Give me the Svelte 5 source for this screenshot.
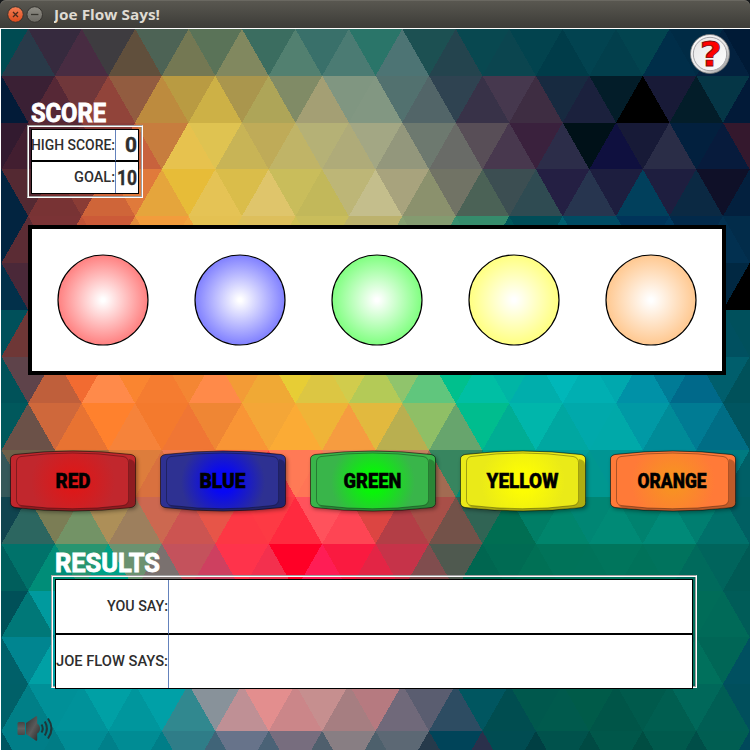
<script>
  const HALF = 26.72;
  const ROW = 46.8;
  const LEFT = 1.5;
  const TOP = 29;

  // One line per row of the mosaic, alternating down and up triangles.
  const mosaic = [
    '004b52 293a49 362a3e 482c42 3e3c40 604f3c 4d6355 747853 5a7358 81885f 3b6d60 528070 39706a 4b7b73 2a7569 4d7474 1c5052 24444e 084850 0b454f 02434e 003c49 024350 023f4c 02444f 002e49 002b45 03213f 001a36',
    '021b38 3a2034 562836 70373a 91443a 925c40 bd8b3e b99b42 cdb146 aa964d aea558 808b66 a49f74 809681 829782 52716f 526568 2f4351 383248 46384e 3e2d42 172a40 1b213d 031d29 000000 181a37 031d29 053646 021a38',
    '321a2f 421e30 5a2a34 6a3036 8a3e3a c8623d c77d3e e7c24e dfc351 c8b456 bfab58 c0b467 b5b176 afab79 a3a784 93977c 6d796f 696b67 584e57 48384e 3a213d 2c2d49 001118 0f103f 171a37 2a2d47 02203e 071b3c 34182d',
    '022440 542932 783334 8a3c35 cf6539 e07a3b e5a53c e7bc38 e5c355 dabd4a dfc56b c9bd5b c2b85a bdb677 c4be8c a8a37d 8b916d 717365 4b6256 3c4e52 2f4b52 241f43 27354f 1d1e3f 01405c 1e1e3f 0b2943 0f1028 03203e',
    '022440 5b2c34 7a3335 c15337 cc5a38 e38b3b f29c3c f2a43e e4c152 dcc15a ddbf5c cfc055 c9bd5b bdb36b bcb26d 88a272 849b70 3a9070 358c6c 00585c 004d58 006070 004b63 004b63 00345a 003a60 02294a 023050 022c4a',
    '02304a 4a2838 - - - - - - - - - - - - - - - - - - - - - - - - - 012842 000000',
    '00505a 6e3736 - - - - - - - - - - - - - - - - - - - - - - - - - 005060 00505c',
    '005259 5e434a bf5f3b f26b31 ff8a4a fa8530 f57c30 f48633 ff8a49 f39b36 f0a935 e7cd35 dcc643 d1cc4c b4ca57 90c46c 60c67d 00c08d 00bfa4 00b5a5 00aeac 00b7b9 00afb2 00a8ae 0091a7 007b96 00698a 005e6c 00515a',
    '00585c 6b5148 cf683b e87332 ff812d f6833a f47a2d f07634 ef8634 f99535 f4a637 fbab35 efb437 f69c40 e2b93e b9af50 8fbf66 67a56d 00bd8e 00ad94 00b6ab 00a7a1 00a9ab 00a9a9 0099a5 008b98 007b93 006d85 005560',
    '35585a 6e6049 8a6b45 a87040 b87040 dd7d3c d9713f ee7a52 ef6548 ff6a50 ff3f48 ff7a56 ff7556 e8855c d0805a c48460 a26b52 37855f 008c78 00a08c 009c90 009c98 009790 009593 00908c 008a90 008080 007a80 005f66',
    '10444f 2c6660 7b7d55 739366 ad8f58 9d7f5d cc6850 cc5451 e75548 fd3744 fd3a44 ff2a3f ff525c fe4554 dc4542 b33e46 a94f48 735249 306454 006e52 007e66 00856c 008674 008a76 00826f 008a78 007e70 00706a 005f62',
    '005e5c 00726a 008d78 289570 00a086 6b9270 7a716f c4525c ce4060 ff334b f3304e ff0026 ff1d55 fa1a40 e32545 c63349 804d4e 4f594f 006650 006b53 007055 007359 00735a 00755c 00725a 00735d 006a5c 00645c 005a55',
    '005058 007878 009a9e 009a9e - - - - - - - - - - - - - - - - - - - - - 006a56 006c58 006a58 005c58',
    '006069 008590 00a0a5 00a0a5 - - - - - - - - - - - - - - - - - - - - - 006656 00705c 006656 005060',
    '006068 007f87 009098 00929a 00a0a5 00969d 00a0a7 31888f 88929a bf9095 e38e8e cb8689 c68f8f a67e81 b67a80 70697a 5a5d70 2d4c62 005660 004d50 00584d 005a4d 005b49 005548 005a4c 005e50 00685a 005e54 004f5c',
    '005560 007e88 007c85 008c95 00808a 008c94 007e88 2f7d88 406478 67738a 4a6276 776d7e 4f5f6d 887e83 4d606c 5c6874 263a4b 004459 2a304b 004c52 003f43 00524c 004a43 00574a 004d42 005a4d 004e48 005e52 00485a'
  ];

  const triangles = mosaic.flatMap((line, r) =>
    line.split(' ').map((c, i) => {
      const x = LEFT + HALF * i;
      const y0 = TOP + ROW * r;
      const y1 = y0 + ROW;
      const up = (r + i) % 2 === 1;
      return {
        color: c === '-' ? '#000' : '#' + c,
        points: up
          ? `${x},${y0} ${x + HALF},${y1} ${x - HALF},${y1}`
          : `${x - HALF},${y0} ${x + HALF},${y0} ${x},${y1}`
      };
    })
  );

  const lights = [
    { id: 'red', color: '#ff8080' },
    { id: 'blue', color: '#8080ff' },
    { id: 'green', color: '#80ff80' },
    { id: 'yellow', color: '#ffff80' },
    { id: 'orange', color: '#ffc890' }
  ];

  const buttons = [
    { name: 'RED', edge: '#c1272d', glow: '#e01616', w: 35, x: 45.5, core: 0.1 },
    { name: 'BLUE', edge: '#2e3192', glow: '#0808f4', w: 46, x: 39.5, core: 0.25 },
    { name: 'GREEN', edge: '#39b54a', glow: '#08f508', w: 58, x: 33.5, core: 0.25 },
    { name: 'YELLOW', edge: '#eaea18', glow: '#fcfc04', w: 72, x: 26.5, core: 0.25 },
    { name: 'ORANGE', edge: '#ff7a38', glow: '#f79420', w: 69, x: 27.5, core: 0.1 }
  ];
</script>

{#snippet label(text, width, cap, cls)}
  <svg class="label {cls}" {width} height={cap}>
    <text x="0" y={cap} font-size={cap / 0.711} textLength={width} lengthAdjust="spacingAndGlyphs">{text}</text>
  </svg>
{/snippet}

<div class="window">
  <header>
    <svg class="controls" width="48" height="28" viewBox="0 0 48 28">
      <defs>
        <linearGradient id="close" x2="0" y2="1"><stop stop-color="#f58055" /><stop offset="1" stop-color="#dc4a1c" /></linearGradient>
        <linearGradient id="min" x2="0" y2="1"><stop stop-color="#908e86" /><stop offset="1" stop-color="#6b6963" /></linearGradient>
      </defs>
      <circle cx="15.5" cy="14.5" r="7.8" fill="url(#close)" stroke="#35332f" />
      <path d="M13 12l5 5M18 12l-5 5" stroke="#4a2a1c" stroke-width="1.3" />
      <circle cx="34.7" cy="14.5" r="7.8" fill="url(#min)" stroke="#35332f" />
      <path d="M31 14.5h7.4" stroke="#37352f" stroke-width="1.3" />
    </svg>
    <svg class="title" width="106" height="28"><text x="0" y="20" textLength="106" lengthAdjust="spacingAndGlyphs">Joe Flow Says!</text></svg>
  </header>

  <main>
    <svg class="backdrop" width="749" height="721" viewBox="1 29 749 721" shape-rendering="crispEdges">
      {#each triangles as t}
        <polygon points={t.points} fill={t.color} />
      {/each}
    </svg>

    <button class="help" aria-label="Help">
      <svg width="42" height="42" viewBox="0 0 42 42">
        <defs>
          <linearGradient id="rim" x2="1" y2="1"><stop stop-color="#fff" /><stop offset="0.6" stop-color="#e4e4e4" /><stop offset="1" stop-color="#8c8c8c" /></linearGradient>
          <linearGradient id="face" x2="1" y2="1"><stop stop-color="#e6e6e6" /><stop offset="1" stop-color="#fff" /></linearGradient>
        </defs>
        <circle cx="21" cy="21" r="19.5" fill="url(#rim)" stroke="#777" stroke-width="0.8" />
        <circle cx="21" cy="21" r="16.7" fill="url(#face)" stroke="#a5a5a8" />
        <text x="10.8" y="33.2" textLength="22" lengthAdjust="spacingAndGlyphs">?</text>
      </svg>
    </button>

    <section class="score">
      <h2>{@render label('SCORE', 75, 18, 'heading')}</h2>
      <div class="etched">
        <div class="table">
          <div class="cell key">{@render label('HIGH SCORE:', 84, 11, 'key-text')}</div>
          <div class="cell num">{@render label('0', 12, 15, 'digits')}</div>
          <div class="cell key">{@render label('GOAL:', 41, 11, 'key-text')}</div>
          <div class="cell num">{@render label('10', 20, 15, 'digits')}</div>
        </div>
      </div>
    </section>

    <section class="lights">
      {#each lights as l}
        <svg width="92" height="92" viewBox="0 0 92 92">
          <defs>
            <radialGradient id={'light-' + l.id}><stop stop-color="#fff" /><stop offset="0.04" stop-color="#fff" /><stop offset="1" stop-color={l.color} /></radialGradient>
          </defs>
          <circle cx="46" cy="46" r="45" fill="url(#light-{l.id})" stroke="#000" stroke-width="1.2" />
        </svg>
      {/each}
    </section>

    <section class="buttons">
      {#each buttons as b}
        <button aria-label={b.name}>
          <svg width="132" height="70" viewBox="0 0 132 70">
            <defs>
              <radialGradient id={'glow-' + b.name} gradientUnits="userSpaceOnUse" cx="63" cy="32" r="42">
                <stop stop-color={b.glow} /><stop offset={b.core} stop-color={b.glow} /><stop offset="1" stop-color={b.edge} />
              </radialGradient>
            </defs>
            <path class="shadow" d="M4 6Q64 -1 123 6Q126 7 126 11V53Q126 57 123 58Q64 65 4 58Q1 57 1 53V11Q1 7 4 6Z" />
            <path d="M5 4.500Q63 -2.500 121 4.500Q125.500 5.500 125.500 9V52.500Q125.500 56.500 121 57.500Q63 64.500 5 57.500Q0.500 56.500 0.500 52.500V9Q0.500 5.500 5 4.500Z" fill={b.edge} />
            <path class="bevel" d="M119 9Q125 10 125 15V52.500Q125 56.500 121 57Q63 64 12 57.500L8 55.500H111Q119 54.500 119 48.500Z" />
            <path d="M11 6.500Q63 -0.500 113 6.500Q118.500 7.500 118.500 12.500V49.500Q118.500 54.500 113 55.500Q63 62 11 55.500Q6.500 54.500 6.500 49.500V12.500Q6.500 7.500 11 6.500Z" fill="url(#glow-{b.name})" stroke="#000" stroke-opacity="0.32" />
            <path d="M5 4.500Q63 -2.500 121 4.500Q125.500 5.500 125.500 9V52.500Q125.500 56.500 121 57.500Q63 64.500 5 57.500Q0.500 56.500 0.500 52.500V9Q0.500 5.500 5 4.500Z" fill="none" stroke="#000" stroke-opacity="0.55" />
            <text x={b.x} y="37.500" font-size="19.700" textLength={b.w} lengthAdjust="spacingAndGlyphs">{b.name}</text>
          </svg>
        </button>
      {/each}
    </section>

    <section class="results">
      <h2>{@render label('RESULTS', 105, 18.5, 'heading')}</h2>
      <div class="etched">
        <div class="table">
          <div class="cell key">{@render label('YOU SAY:', 61, 11, 'key-text')}</div>
          <div class="cell"></div>
          <div class="cell key">{@render label('JOE FLOW SAYS:', 112, 11, 'key-text')}</div>
          <div class="cell"></div>
        </div>
      </div>
    </section>

    <button class="sound" aria-label="Sound">
      <svg width="42" height="30" viewBox="15 714 42 30">
        <defs>
          <linearGradient id="cone" x2="1" y2="1"><stop stop-color="#2f2f2f" /><stop offset="0.5" stop-color="#5a5a5a" /><stop offset="1" stop-color="#252525" /></linearGradient>
          <linearGradient id="magnet" x2="0" y2="1"><stop stop-color="#444" /><stop offset="0.5" stop-color="#606060" /><stop offset="1" stop-color="#484848" /></linearGradient>
        </defs>
        <rect x="17.500" y="722" width="7.500" height="13" rx="1.500" fill="url(#magnet)" />
        <path d="M26 723L36 716.200Q37.200 716 37.200 717V723.500Q40 725 40 728.500Q40 732 37.200 733.500V740Q37.200 741 36 740.800L26 734Z" fill="url(#cone)" />
        <path d="M41.500 724.500Q44 728.500 41.500 732.500M44.800 721.500Q49 728.500 44.800 735.500M48 718.500Q55 728.500 48 738.500" fill="none" stroke="#1f3638" stroke-width="2" />
      </svg>
    </button>
  </main>
</div>

<style>
  :global(body) { margin: 0; }
  .window { width: 750px; height: 750px; display: flex; flex-direction: column; overflow: hidden; background: #16181a; font-family: Roboto, "Liberation Sans", sans-serif; }
  header { height: 28px; display: flex; flex: none; background: linear-gradient(#5a5851, #45443f 70%, #3d3c38); border-radius: 6px 6px 0 0; box-shadow: inset 0 1px #6a6861; }
  .controls { width: 48px; flex: none; margin-right: 6px; }
  .title text { font: bold 14.5px "Open Sans", "Noto Sans", sans-serif; fill: #dfdbd2; }
  main { position: relative; flex: 1; box-sizing: border-box; border-top: 1px solid #fff; border-left: 1px solid #fff; display: flex; flex-direction: column; }
  svg { display: block; }
  h2 { margin: 0; }
  button { padding: 0; border: 0; background: none; display: block; font: inherit; }
  section { position: relative; }
  .backdrop { position: absolute; inset: 0; }
  .label { overflow: visible; }
  .label text { font-weight: 500; fill: #2e2e2e; }
  .heading text { font-weight: 700; fill: #fff; stroke: #fff; stroke-width: 0.9; stroke-linejoin: miter; }
  .label.digits text { font-weight: 700; stroke: #2e2e2e; stroke-width: 0.4; }
  .label.heading text { font-weight: 700; fill: #fff; }
  .help { position: absolute; left: 688px; top: 4px; }
  .help text { font: bold 33px "DejaVu Sans", sans-serif; fill: #f00; stroke: #7a1010; stroke-width: 0.8; }
  .etched { box-sizing: border-box; border: 1px solid #a0a0a0; border-right-color: #fff; border-bottom-color: #fff; box-shadow: inset 1px 1px #fff, inset -1px -1px #a0a0a0; }
  .table { display: grid; box-sizing: border-box; background: #fff; border: 1px solid #000; }
  .cell { display: flex; align-items: center; justify-content: flex-end; }
  .key { border-right: 1px solid #6482bc; padding-bottom: 2px; }
  .cell:nth-child(-n+2) { border-bottom: 2px solid #000; }
  .num { padding: 0 1px 1px 0; }
  .score { margin: 75px 0 0 26px; width: 116px; }
  .score h2 { padding-left: 4px; height: 21px; }
  .score .etched { height: 73px; padding: 3px; }
  .score .table { height: 65px; grid-template-columns: 84px 1fr; grid-template-rows: 32px 1fr; }
  .score .key { margin-left: -1px; }
  .lights { box-sizing: border-box; margin: 27px 0 0 27px; width: 698px; height: 150px; background: #fff; border: 4px solid #000; padding: 0 25px; display: flex; align-items: center; justify-content: space-between; }
  .lights svg { flex: none; }
  .buttons { margin: 75px 0 0 9px; height: 70px; display: flex; gap: 18px; }
  .buttons button { flex: none; width: 132px; }
  .buttons svg { overflow: visible; }
  .buttons text { font-weight: 900; fill: #000; stroke: #000; stroke-width: 0.4; }
  .shadow { fill: #000; opacity: 0.4; filter: blur(2px); transform: translate(1px, 1px); }
  .bevel { fill: #000; opacity: 0.26; }
  .results { margin: 33px 0 0 50px; width: 646px; }
  .results h2 { height: 22px; padding-left: 4px; }
  .results .etched { height: 113px; padding: 3px; }
  .results .table { height: 110px; grid-template-columns: 113px 1fr; grid-template-rows: 55px 1fr; }
  .results .key { margin-left: -1px; }
  .sound { position: absolute; left: 14px; top: 685px; }
</style>
